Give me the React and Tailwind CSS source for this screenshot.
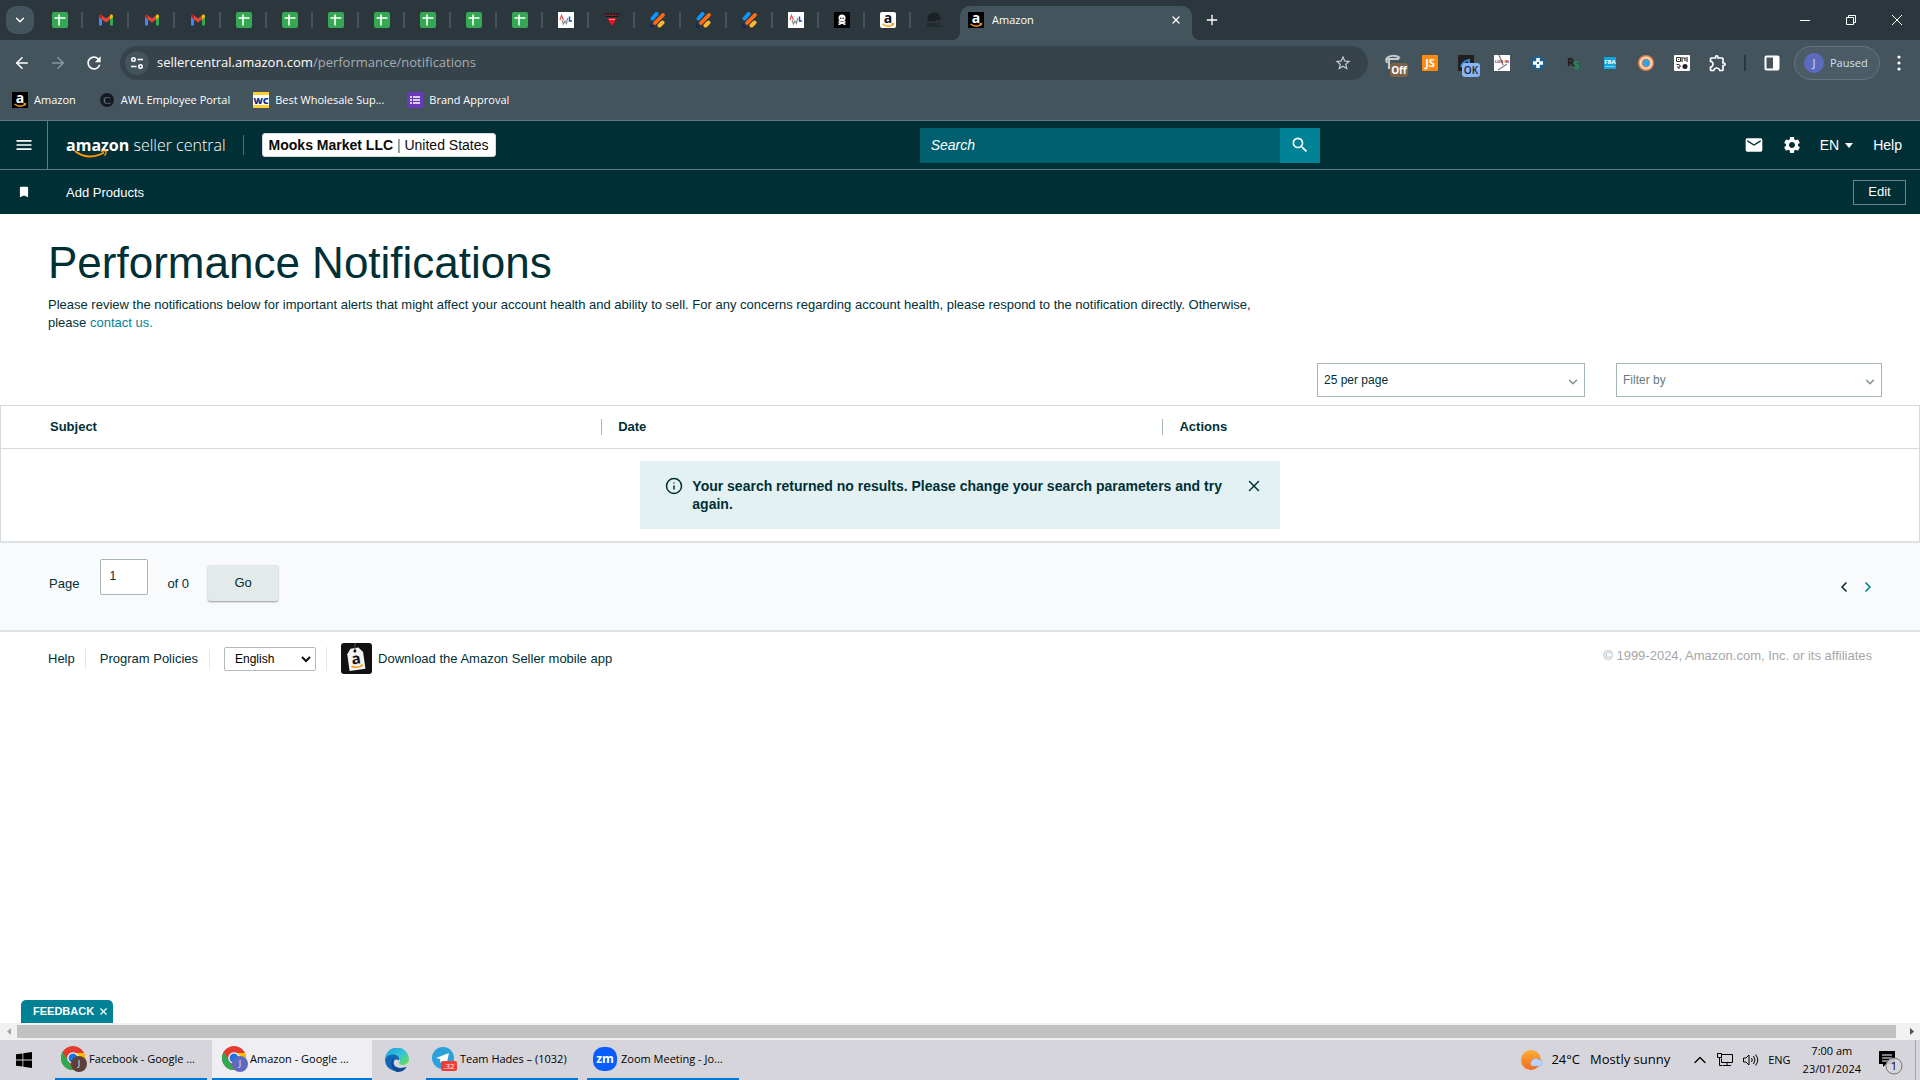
import React, { useState } from 'react';
import { ArrowLeft, ArrowRight, ChevronDown, ChevronLeft, ChevronRight, ChevronUp, Info, Plus, X } from 'lucide-react';
import { MdBookmark, MdEmail, MdMenu, MdRefresh, MdSearch, MdSettings, MdStarOutline, MdOutlineExtension } from 'react-icons/md';

/* ---------- favicons ---------- */

const SheetsIcon = () => (
  <svg viewBox="0 0 16 16" className="w-4 h-4">
    <rect width="16" height="16" rx="2" fill="#34a853" />
    <path d="M2.5 6h11M7 2.5v11" stroke="#fff" strokeWidth="1.6" />
  </svg>
);

const GmailIcon = () => (
  <svg viewBox="0 0 16 16" className="w-4 h-4">
    <path d="M1 4v8.5c0 .6.4 1 1 1h2V6.3z" fill="#4285f4" />
    <path d="M15 4v8.5c0 .6-.4 1-1 1h-2V6.3z" fill="#34a853" />
    <path d="M12 3.4v4l3-2.3V4c0-1.3-1.5-2-2.5-1.2z" fill="#fbbc04" />
    <path d="M4 3.4v4L1 5.1V4c0-1.3 1.5-2 2.5-1.2z" fill="#c5221f" />
    <path d="M4 7.4v-4l4 3 4-3v4l-4 3z" fill="#ea4335" />
  </svg>
);

const AwlIcon = () => (
  <svg viewBox="0 0 16 16" className="w-4 h-4">
    <rect width="16" height="16" fill="#fff" />
    <path d="M2 8l1.500-4.500L5.500 8" stroke="#e05555" strokeWidth="1.200" fill="none" />
    <path d="M4 8l1.500 4L7 9l1.500 2.500L9.500 6" stroke="#8a8a8a" fill="none" strokeWidth="1.200" />
    <path d="M11.500 4.500v4.500h2.500" stroke="#1a4fb5" fill="none" strokeWidth="1.500" />
  </svg>
);

const RedTriangleIcon = () => (
  <svg viewBox="0 0 16 16" className="w-4 h-4">
    <path d="M0 1.500h16L14.500 5h-13z" fill="#2a1014" />
    <path d="M1.500 3.200h13" stroke="#c04a5a" strokeDasharray="2 1" />
    <path d="M3.500 6h9L8 14z" fill="#f5121d" />
    <path d="M5 7.500h6" stroke="#ffb3b3" strokeWidth=".8" />
  </svg>
);

const StripesIcon = () => (
  <svg viewBox="0 0 16 16" className="w-4 h-4" strokeLinecap="round">
    <path d="M2.500 6.500L6.500 2" stroke="#0b95ff" strokeWidth="4" />
    <path d="M5 11L13 3" stroke="#ff6a13" strokeWidth="3.800" />
    <path d="M9.500 13.500L12.500 10.500" stroke="#fbb731" strokeWidth="4" />
    <path d="M0 11l4 4.500H0z" fill="#15235a" />
  </svg>
);

const SkullIcon = () => (
  <svg viewBox="0 0 16 16" className="w-4 h-4">
    <rect width="16" height="16" fill="#000" />
    <circle cx="8" cy="6" r="3.500" fill="#fff" />
    <path d="M4.500 12.500l7-3M4.500 9.500l7 3" stroke="#fff" strokeWidth="1.600" />
    <circle cx="6.800" cy="6.200" r=".7" />
    <circle cx="9.200" cy="6.200" r=".7" />
  </svg>
);

const AmazonIcon = ({ dark = false }) => (
  <svg viewBox="0 0 16 16" className="w-4 h-4 shrink-0 overflow-visible">
    <rect width="16" height="16" rx={dark ? 0 : 2} fill={dark ? '#000' : '#fff'} />
    <text x="8" y="10.500" textAnchor="middle" fontFamily="Open Sans, sans-serif" fontWeight="700" fontSize="14" fill={dark ? '#fff' : '#111'}>a</text>
    <path d="M2.500 12c3.500 2.800 7.500 2.600 10.500.6M11.500 11.800l2-.2-.5 1.900" stroke="#ff9900" strokeWidth="1.300" fill="none" />
  </svg>
);

const MagIcon = () => (
  <svg viewBox="0 0 16 16" className="w-4 h-4 overflow-visible">
    <path d="M2 9c-2-4 1-8.500 6-8.500s8 4 6.500 8l-3-1-2 2z" fill="#1b2125" />
    <text x="8" y="15" textAnchor="middle" fontFamily="Liberation Sans, sans-serif" fontWeight="700" fontSize="6" fill="#1b2125">MAG</text>
  </svg>
);

const pinnedTabs = [
  SheetsIcon, GmailIcon, GmailIcon, GmailIcon,
  SheetsIcon, SheetsIcon, SheetsIcon, SheetsIcon, SheetsIcon, SheetsIcon, SheetsIcon,
  AwlIcon, RedTriangleIcon, StripesIcon, StripesIcon, StripesIcon,
  AwlIcon, SkullIcon, AmazonIcon, MagIcon,
];

/* ---------- browser chrome ---------- */

const TabStrip = () => (
  <div className="flex h-10 items-end bg-[#2c373d] pl-1.5">
    <button aria-label="Search tabs" className="mb-1.5 flex h-7 w-7 items-center justify-center rounded-[10px] bg-[#43545d] text-white">
      <ChevronDown size={14} strokeWidth={2.5} />
    </button>
    <div className="ml-[3px] flex h-10">
      {pinnedTabs.map((Icon, i) => (
        <button key={i} aria-label={`Tab ${i + 1}`} className="flex h-10 w-[46px] items-center">
          <span className="flex grow justify-center"><Icon /></span>
          {i < pinnedTabs.length - 1 && <span className="-ml-0.5 h-4 w-0.5 bg-[#43545d]" />}
        </button>
      ))}
    </div>
    <div className="relative ml-[3px] flex h-[34px] w-[232px] items-center rounded-t-[10px] bg-[#43545d] px-2 pb-1.5 text-white">
      <span className="absolute -left-2 bottom-0 h-2 w-2 bg-[radial-gradient(circle_at_0_0,#2c373d_8px,#43545d_8px)]" />
      <span className="absolute -right-2 bottom-0 h-2 w-2 bg-[radial-gradient(circle_at_100%_0,#2c373d_8px,#43545d_8px)]" />
      <AmazonIcon dark />
      <span className="ml-2 grow text-[11px]">Amazon</span>
      <button aria-label="Close tab" className="p-0.5"><X size={12} strokeWidth={2.5} /></button>
    </div>
    <button aria-label="New tab" className="ml-3 flex h-10 items-center text-white"><Plus size={16} /></button>
    <div className="ml-auto flex h-10 text-white">
      <button aria-label="Minimize" className="flex w-[46px] items-center justify-center">
        <svg width="10" height="10"><path d="M0 5.500h10" stroke="#fff" /></svg>
      </button>
      <button aria-label="Restore" className="flex w-[46px] items-center justify-center">
        <svg width="10" height="10" fill="none" stroke="#fff"><path d="M.5 2.500h7v7h-7zM2.500 2.500v-2h7v7h-2" /></svg>
      </button>
      <button aria-label="Close" className="flex w-[46px] items-center justify-center">
        <svg width="10" height="10"><path d="M0 0l10 10M10 0L0 10" stroke="#fff" /></svg>
      </button>
    </div>
  </div>
);

const extensions = [
  {
    name: 'Recorder',
    icon: (
      <svg width="24" height="24" className="overflow-visible">
        <path d="M4 8c3-4 10-4 14-1M4 8l1 4M5 8h12M7 9v9" stroke="#c8ccd0" strokeWidth="2" fill="none" />
        <rect x="8" y="12" width="18" height="14" rx="3" fill="#7d6448" />
        <text x="17" y="23" textAnchor="middle" fontSize="10" fontWeight="700" fill="#fff">Off</text>
      </svg>
    ),
  },
  {
    name: 'Jungle Scout',
    icon: (
      <svg width="16" height="16" className="overflow-visible">
        <rect width="16" height="16" rx="1" fill="#ff8a0f" />
        <text x="8" y="12" textAnchor="middle" fontSize="11" fontWeight="700" fill="#fff">JS</text>
      </svg>
    ),
  },
  {
    name: 'Status',
    icon: (
      <svg width="24" height="24" className="overflow-visible">
        <rect x="4" y="4" width="16" height="16" fill="#231f20" />
        <path d="M7 16c1-4 3-6 8-7v3" stroke="#2b87d1" strokeWidth="2" fill="none" />
        <rect x="8" y="12" width="18" height="14" rx="3" fill="#8ab4f8" />
        <text x="17" y="23" textAnchor="middle" fontSize="10" fontWeight="600" fill="#202124">OK</text>
      </svg>
    ),
  },
  {
    name: 'Log in',
    icon: (
      <svg width="16" height="16" className="overflow-visible">
        <rect width="16" height="16" fill="#fff" />
        <path d="M5 0l4 10M4 15l9-6" stroke="#888" strokeWidth="1.500" />
        <text x="8" y="8" textAnchor="middle" fontSize="4" fontWeight="700" fill="#8c1c1c">LOG IN</text>
      </svg>
    ),
  },
  {
    name: 'Helper',
    icon: (
      <svg width="16" height="16">
        <circle cx="8" cy="8" r="7" fill="#1d6296" />
        <path d="M8 3v10M3 8h10" stroke="#fff" strokeWidth="3.500" />
        <rect x="7" y="7" width="2" height="2" fill="#1d6296" />
      </svg>
    ),
  },
  {
    name: 'RevSeller',
    icon: (
      <svg width="16" height="16" className="overflow-visible">
        <text x="1" y="11" fontSize="11" fontWeight="700" fill="#1c1c1c">R</text>
        <text x="8" y="14" fontSize="10" fontWeight="700" fill="#0f9a41">S</text>
      </svg>
    ),
  },
  {
    name: 'FBA calculator',
    icon: (
      <svg width="16" height="16">
        <rect x="2" y="2" width="12" height="12" fill="#13a5df" />
        <text x="8" y="9" textAnchor="middle" fontSize="6" fontWeight="700" fill="#fff">FBA</text>
        <path d="M3 11.500h10" stroke="#7fd0f0" />
      </svg>
    ),
  },
  {
    name: 'Keepa',
    icon: (
      <svg width="16" height="16">
        <circle cx="8" cy="8" r="8" fill="#e5824a" />
        <circle cx="8" cy="8" r="5.500" fill="none" stroke="#fbdcc0" strokeWidth="2" />
        <circle cx="8" cy="8" r="3.500" fill="#2ea3e6" />
      </svg>
    ),
  },
  {
    name: 'QR code',
    icon: (
      <svg width="16" height="16" fill="none" stroke="#333">
        <rect width="16" height="16" rx="1" fill="#fff" stroke="none" />
        <path d="M2.500 2.500h4v4h-4zM2.500 9.500h3" />
        <path d="M4 4.500h1M9 3h2v3M13 2v5M3 12h2v2M6 10v2M8 2v5" strokeWidth="1.200" />
        <circle cx="11" cy="11.500" r="2.500" fill="#222" stroke="none" />
      </svg>
    ),
  },
  { name: 'Extensions', icon: <MdOutlineExtension size={20} color="#fff" /> },
];

const Toolbar = () => (
  <div className="flex h-[46px] items-center text-white">
    <button aria-label="Back" className="ml-[13px]"><ArrowLeft size={18} /></button>
    <button aria-label="Forward" className="ml-[18px] text-[#8a969c]"><ArrowRight size={18} /></button>
    <button aria-label="Reload" className="ml-[17px]"><MdRefresh size={20} /></button>
    <div className="ml-4 flex h-[34px] grow items-center rounded-full bg-[#37434a] pl-[5px] pr-4">
      <span className="flex h-6 w-6 items-center justify-center rounded-full bg-[#43545d]">
        <svg width="14" height="14" fill="none" stroke="#fff" strokeWidth="1.600">
          <circle cx="3.500" cy="3.500" r="1.700" />
          <path d="M7.500 3.500H13M1 10.500h5.500" />
          <circle cx="10.500" cy="10.500" r="1.700" />
        </svg>
      </span>
      <a href="#" className="ml-2 grow text-[13px]">
        sellercentral.amazon.com<span className="text-[#a4adb2]">/performance/notifications</span>
      </a>
      <button aria-label="Bookmark this tab" className="text-[#c7ccd0]"><MdStarOutline size={18} /></button>
    </div>
    <div className="ml-2 flex">
      {extensions.map((ext) => (
        <button key={ext.name} aria-label={ext.name} className="flex h-6 w-9 items-center justify-center">{ext.icon}</button>
      ))}
    </div>
    <span className="ml-2 h-4 w-0.5 bg-[#2c373d]" />
    <button aria-label="Side panel" className="ml-[18px]">
      <svg width="16" height="16"><rect x="1.500" y="1.500" width="13" height="13" rx="1" fill="none" stroke="#fff" strokeWidth="2" /><path d="M9 1h6v14H9z" fill="#fff" /></svg>
    </button>
    <button className="ml-3.5 flex h-[34px] w-[86px] items-center rounded-full border border-[#66757d] bg-[#4b5c66] pl-[9px] text-[#cfe0ef]">
      <span className="mr-1.5 flex h-5 w-5 items-center justify-center rounded-full bg-[#5c6bc0] text-[11px]">J</span>
      <span className="text-[11px]">Paused</span>
    </button>
    <button aria-label="Menu" className="ml-[17px] mr-[19px]">
      <svg width="4" height="16" fill="#fff"><circle cx="2" cy="2" r="1.600" /><circle cx="2" cy="8" r="1.600" /><circle cx="2" cy="14" r="1.600" /></svg>
    </button>
  </div>
);

const Bookmarks = () => (
  <nav className="flex h-[34px] items-start gap-[23px] px-3 pt-1.5 text-[11px] leading-4 text-white">
    <a href="#" className="flex items-center gap-1.5"><AmazonIcon dark />Amazon</a>
    <a href="#" className="flex items-center gap-1.5">
      <svg width="16" height="16"><circle cx="8" cy="8" r="7" fill="#141b22" /><text x="8" y="12" textAnchor="middle" fontFamily="Liberation Serif, serif" fontSize="11" fill="#6f7f8c">C</text></svg>
      AWL Employee Portal
    </a>
    <a href="#" className="flex items-center gap-1.5">
      <svg width="16" height="16" className="overflow-visible">
        <rect width="16" height="16" fill="#fff" />
        <path d="M0 1.500h16M0 14.500h16" stroke="#ffcb2f" strokeWidth="3" />
        <text x="8" y="11.500" textAnchor="middle" fontFamily="Open Sans, sans-serif" fontWeight="800" fontSize="9" fill="#0b2a8f">WC</text>
      </svg>
      Best Wholesale Sup...
    </a>
    <a href="#" className="flex items-center gap-1.5">
      <svg width="16" height="16"><rect width="16" height="16" rx="1" fill="#673ab7" /><path d="M3 5h2M3 8h2M3 11h2M6 5h7M6 8h7M6 11h7" stroke="#fff" strokeWidth="1.600" /></svg>
      Brand Approval
    </a>
  </nav>
);

/* ---------- seller central ---------- */

const Logo = () => (
  <a href="#" className="relative ml-[18px] whitespace-nowrap font-['Open_Sans',sans-serif] text-[16px] leading-6 text-white">
    <span className="font-bold">amazon</span> <span className="font-light">seller central</span>
    <svg width="34" height="9" className="absolute left-2 top-[17px]" fill="none" stroke="#ff9900">
      <path d="M1 1c8 7 20 7 29 1.500" strokeWidth="2" />
      <path d="M27 1.500c2-.8 4-.8 5-.3.300 1.200-.2 3-1.500 4.500" strokeWidth="1.300" />
    </svg>
  </a>
);

const SellerHeader = () => (
  <header className="bg-[#002f36] text-white">
    <div className="flex h-[50px] items-center justify-between border-y border-[#5f7d80]">
      <div className="flex h-full items-center">
        <button aria-label="Open menu" className="flex h-full w-12 items-center justify-center border-r border-[#5f7d80]"><MdMenu size={20} /></button>
        <Logo />
        <span className="ml-[17px] h-5 w-px bg-[#4f6f73]" />
        <button className="ml-[18px] h-6 rounded-[3px] border border-[#d5dbdb] bg-white px-1.5 text-[14px] leading-5 text-[#0a0a0a]">
          <b>Mooks Market LLC</b> <span className="text-[#008296]">|</span> United States
        </button>
      </div>
      <form className="flex h-[35px] w-[400px]" onSubmit={(e) => e.preventDefault()}>
        <input aria-label="Search" placeholder="Search" className="min-w-0 grow bg-[#005f6e] px-[11px] text-[14px] italic text-white placeholder:text-white" />
        <button aria-label="Submit search" className="flex w-10 items-center justify-center bg-[#008296]"><MdSearch size={20} /></button>
      </form>
      <div className="flex items-center pr-[18px] text-[14px]">
        <a href="#" aria-label="Messages"><MdEmail size={20} /></a>
        <a href="#" aria-label="Settings" className="ml-[18px]"><MdSettings size={20} /></a>
        <button className="ml-[18px] flex items-center gap-1.5">
          EN
          <svg width="8" height="5"><path d="M0 0h8L4 5z" fill="#fff" /></svg>
        </button>
        <a href="#" className="ml-5">Help</a>
      </div>
    </div>
    <div className="flex h-11 items-center text-[13px]">
      <span className="flex w-12 justify-center"><MdBookmark size={14} /></span>
      <a href="#" className="ml-[18px] pt-0.5">Add Products</a>
      <button className="ml-auto mr-3.5 h-[25px] w-[53px] border border-[#6d8689]">Edit</button>
    </div>
  </header>
);

const DropDown = ({ label, options, className }) => (
  <label className="relative block">
    <select aria-label={label} className={`h-[34px] appearance-none border border-[#a6b5b6] bg-white px-1.5 text-[12px] ${className}`}>
      {options.map((option) => <option key={option}>{option}</option>)}
    </select>
    <ChevronDown size={14} strokeWidth={2.5} className="pointer-events-none absolute right-[5px] top-3 text-[#7e9294]" />
  </label>
);

const NoResults = ({ onClose }) => (
  <div role="status" className="mx-auto flex w-1/3 items-start bg-[#e3f1f2] pb-4 pl-[25px] pr-[17px] pt-4 text-[14px] font-bold leading-[18px]">
    <Info size={18} strokeWidth={2} className="shrink-0" />
    <p className="ml-[9px] grow">Your search returned no results. Please change your search parameters and try again.</p>
    <button aria-label="Dismiss" onClick={onClose} className="ml-3 shrink-0"><X size={18} /></button>
  </div>
);

const NotificationsTable = () => {
  const [showAlert, setShowAlert] = useState(true);

  return (
    <table className="w-full table-fixed border border-b-0 border-[#d5dbdb] text-left">
      <thead>
        <tr className="h-[43px] border-b border-[#d5dbdb]">
          <th className="w-[31.3%] pl-[49px]">Subject</th>
          <th className="w-[29.25%]"><span className="block border-l border-[#a6b5b6] pl-4 leading-4">Date</span></th>
          <th><span className="block border-l border-[#a6b5b6] pl-4 leading-4">Actions</span></th>
        </tr>
      </thead>
      <tbody>
        <tr>
          <td colSpan={3} className="py-3">{showAlert && <NoResults onClose={() => setShowAlert(false)} />}</td>
        </tr>
      </tbody>
    </table>
  );
};

const Pagination = () => (
  <div className="flex h-[91px] items-start border-y-2 border-[#dce2e5] bg-[#f8fafc] pl-[49px] pr-11 pt-4">
    <label htmlFor="page" className="mt-4 leading-[18px]">Page</label>
    <input id="page" defaultValue="1" className="ml-[21px] h-9 w-12 rounded-[2px] border border-[#a6b5b6] bg-white px-2 pb-0.5 text-[12px]" />
    <span className="ml-[19px] mt-4 leading-[18px]">of 0</span>
    <button className="ml-[19px] mt-1.5 h-9 w-[70px] rounded-[2px] bg-[#e2eaea] shadow-[0_1px_2px_rgba(0,0,0,0.4)]">Go</button>
    <div className="ml-auto mt-5 flex gap-2">
      <button aria-label="Previous page"><ChevronLeft size={16} strokeWidth={2.5} /></button>
      <button aria-label="Next page" className="text-[#008296]"><ChevronRight size={16} strokeWidth={2.5} /></button>
    </div>
  </div>
);

const Footer = () => (
  <footer className="flex items-center px-12 pt-[11px]">
    <a href="#">Help</a>
    <span className="ml-2.5 mr-3.5 h-5 w-px bg-[#e3e6e6]" />
    <a href="#">Program Policies</a>
    <span className="ml-[11px] mr-3.5 h-5 w-px bg-[#e3e6e6]" />
    <label className="relative block text-black">
      <select aria-label="Language" className="h-6 w-[92px] appearance-none rounded-[2px] border border-[#b4b9b9] bg-white pl-2.5 text-[12px]">
        <option>English</option>
      </select>
      <svg width="10" height="7" className="pointer-events-none absolute right-[5px] top-[9px]"><path d="M1 1l4 4 4-4" stroke="#111" strokeWidth="2" fill="none" /></svg>
    </label>
    <span className="ml-2.5 mr-3.5 h-6 w-px bg-[#e3e6e6]" />
    <a href="#" className="flex items-center gap-1.5">
      <svg width="31" height="31" viewBox="0 0 31 31">
        <rect width="31" height="31" rx="3" fill="#111" />
        <g transform="rotate(-8 15 16)">
          <path d="M11 5h8l4 5v17H7V10z" fill="#f4f4f4" />
          <circle cx="15" cy="8" r="1.500" fill="#111" />
          <text x="15" y="21" textAnchor="middle" fontFamily="Open Sans, sans-serif" fontSize="15" fontWeight="700" fill="#111">a</text>
          <path d="M9.500 22.500c4 2.500 8 2.500 11.500 0" stroke="#ff9900" strokeWidth="1.500" fill="none" />
        </g>
        <path d="M14 0v7" stroke="#555" />
      </svg>
      Download the Amazon Seller mobile app
    </a>
    <span className="ml-auto pb-1.5 text-[#a6a6a6]">© 1999-2024, Amazon.com, Inc. or its affiliates</span>
  </footer>
);

/* ---------- windows taskbar ---------- */

const ChromeIcon = ({ badge }) => (
  <svg width="28" height="26" className="shrink-0">
    <circle cx="12" cy="12" r="12" fill="#e33b2e" />
    <path d="M1.600 6L9 18l3 6A12 12 0 0 1 1.600 6z" fill="#2da94f" />
    <path d="M12 24l6-9V7h4.900A12 12 0 0 1 12 24z" fill="#fdbd00" />
    <path d="M12 7h11v3H12z" fill="#fdbd00" />
    <circle cx="12" cy="12" r="5.800" fill="#fff" />
    <circle cx="12" cy="12" r="4.500" fill="#1a73e8" />
    <circle cx="18" cy="18" r="8" fill={badge} />
    <text x="18" y="21" textAnchor="middle" fontSize="9" fill="#eee">J</text>
  </svg>
);

const EdgeIcon = () => (
  <svg width="24" height="24">
    <defs>
      <linearGradient id="edge" x1="0" y1="0" x2="1" y2="1">
        <stop offset="0" stopColor="#1b9de2" />
        <stop offset=".5" stopColor="#35c1d8" />
        <stop offset="1" stopColor="#6fe04a" />
      </linearGradient>
    </defs>
    <path d="M0 12A12 12 0 0 1 24 11c0 4-3 6-6.500 6-3 0-4-1.500-3-3 1.500-2.500-1-5-4.500-5C5 9 1 11 0 12z" fill="url(#edge)" />
    <path d="M0 12c1-4 5-6 9-5.500 3.500.4 6 3 5 6-3-2.500-6 0-5.500 3 .6 4 6 6 13 3A12 12 0 0 1 0 12z" fill="#1467b8" />
    <path d="M8.500 10c-4 3-3 11 3.500 14 4 .3 8-2 10-5-6 3-13 1-13.500-4-.1-2 .5-4 0-5z" fill="#0c4a94" />
  </svg>
);

const TelegramIcon = () => (
  <svg width="26" height="26" className="shrink-0">
    <circle cx="11" cy="12" r="11" fill="#2aa1da" />
    <path d="M4 12l13-5-2.500 11-4-3-2 2-.5-4z" fill="#fff" />
    <rect x="9" y="15" width="16" height="10" rx="2" fill="#f23c34" />
    <text x="17" y="23" textAnchor="middle" fontSize="8" fill="#fff">.32</text>
  </svg>
);

const ZoomIcon = () => (
  <svg width="24" height="24" className="shrink-0">
    <rect width="24" height="24" rx="10" fill="#0b5cff" />
    <text x="12" y="16" textAnchor="middle" fontSize="12" fontWeight="700" fill="#fff">zm</text>
  </svg>
);

const Taskbar = () => (
  <div className="flex h-10 items-stretch bg-[#d6d5dc] text-[11px] text-black">
    <button aria-label="Start" className="flex w-[55px] items-center pl-4">
      <svg width="16" height="16"><path d="M0 2.300L6.500 1.400v6.100H0zM7.300 1.300L16 0v7.500H7.300zM0 8.400h6.500v6.200L0 13.700zM7.300 8.400H16V16l-8.700-1.300z" /></svg>
    </button>
    <button className="flex w-[152px] items-center border-b-2 border-[#0078d7] px-1.5"><ChromeIcon badge="#5d4037" />Facebook - Google ...</button>
    <button className="ml-[5px] flex w-40 items-center border-b-2 border-[#0078d7] bg-[#efeef2] px-2.5"><ChromeIcon badge="#5c6bc0" />Amazon - Google ...</button>
    <button aria-label="Microsoft Edge" className="flex w-[54px] items-center pl-[13px]"><EdgeIcon /></button>
    <button className="flex w-[152px] items-center gap-0.5 border-b-2 border-[#0078d7] px-1.5"><TelegramIcon />Team Hades – (1032)</button>
    <button className="ml-[9px] flex w-[152px] items-center gap-1 border-b-2 border-[#0078d7] px-1.5"><ZoomIcon />Zoom Meeting - Jo...</button>
    <button className="ml-auto flex items-center text-[13px]">
      <svg width="24" height="22" className="mr-1.5">
        <defs>
          <linearGradient id="sun" x1="0" y1="0" x2="0" y2="1">
            <stop offset="0" stopColor="#fbb034" />
            <stop offset="1" stopColor="#f4681f" />
          </linearGradient>
        </defs>
        <circle cx="10" cy="11" r="10" fill="url(#sun)" />
        <path d="M11 17a3 3 0 0 1 0-5 4 4 0 0 1 7-1 3 3 0 0 1 1 6z" fill="#b9d3fa" stroke="#8fb2ee" strokeWidth=".5" />
      </svg>
      24°C<span className="ml-2.5">Mostly sunny</span>
    </button>
    <button aria-label="Hidden icons" className="ml-5"><ChevronUp size={20} strokeWidth={1.5} /></button>
    <svg width="18" height="16" className="ml-1.5 self-center" fill="none" stroke="#000">
      <path d="M5.500 2.500h11v8h-11v-4M11 10.500v3M7 13.500h8M1.500 1.500h4v4h-4zM3.500 5.500v8h3" />
    </svg>
    <svg width="18" height="16" className="ml-2 self-center" fill="none" stroke="#000">
      <path d="M1.500 6v4h2.500l3 3V3L4 6zM9.500 6q1.500 2 0 4M11.500 4q3 4 0 8M13.500 2.500q4.500 5.500 0 11" />
    </svg>
    <span className="ml-2 self-center">ENG</span>
    <div className="ml-3 self-center text-center leading-[18px]">7:00 am<br />23/01/2024</div>
    <button aria-label="Notifications" className="ml-[17px] mr-[11px]">
      <svg width="26" height="26" className="overflow-visible">
        <path d="M1 4h16v13h-9l-3 3v-3H1z" />
        <path d="M4 8h10M4 11h10M4 14h6" stroke="#fff" />
        <circle cx="16" cy="19" r="8" fill="#d6d5dc" fillOpacity=".9" stroke="#777" />
        <text x="16" y="23" textAnchor="middle" fontSize="11">1</text>
      </svg>
    </button>
    <span className="mr-1 w-px bg-[#a5a4ab]" />
  </div>
);

export default function App() {
  return (
    <div className="flex min-h-screen flex-col bg-white font-['Open_Sans',sans-serif]">
      <TabStrip />
      <div className="bg-[#43545d]">
        <Toolbar />
        <Bookmarks />
      </div>

      <div className="relative flex grow flex-col font-['Liberation_Sans',Arial,sans-serif] text-[13px] text-[#002f36]">
        <SellerHeader />
        <main>
          <div className="w-2/3 pl-12 pt-[25px]">
            <h1 className="text-[44px] leading-[48px]">Performance Notifications</h1>
            <p className="mt-[9px] leading-[18px]">
              Please review the notifications below for important alerts that might affect your account health and ability to sell. For any concerns
              regarding account health, please respond to the notification directly. Otherwise, please <a href="#" className="text-[#008296]">contact us.</a>
            </p>
          </div>
          <div className="mb-2 mt-[31px] flex justify-end gap-[31px] pr-[38px]">
            <DropDown label="Results per page" options={['25 per page', '50 per page']} className="w-[268px]" />
            <DropDown label="Filter" options={['Filter by']} className="w-[266px] text-[#687a7c]" />
          </div>
          <NotificationsTable />
          <Pagination />
        </main>
        <Footer />
        <div className="absolute bottom-[17px] left-[21px] flex h-[23px] items-center rounded-t-[5px] bg-[#008296] pl-3 pr-1 text-[11px] font-bold text-white">
          <button>FEEDBACK</button>
          <button aria-label="Close feedback" className="ml-1"><X size={11} strokeWidth={2.5} /></button>
        </div>
        <div className="mt-auto flex h-[17px] items-center bg-[#f1f1f1]">
          <span className="flex w-[17px] justify-center"><svg width="4" height="7"><path d="M4 0v7L0 3.500z" fill="#a3a3a3" /></svg></span>
          <span className="h-[13px] grow bg-[#c1c1c1]" />
          <span className="flex w-6 justify-center pl-2"><svg width="4" height="7"><path d="M0 0v7l4-3.500z" fill="#505050" /></svg></span>
        </div>
      </div>

      <Taskbar />
    </div>
  );
}
